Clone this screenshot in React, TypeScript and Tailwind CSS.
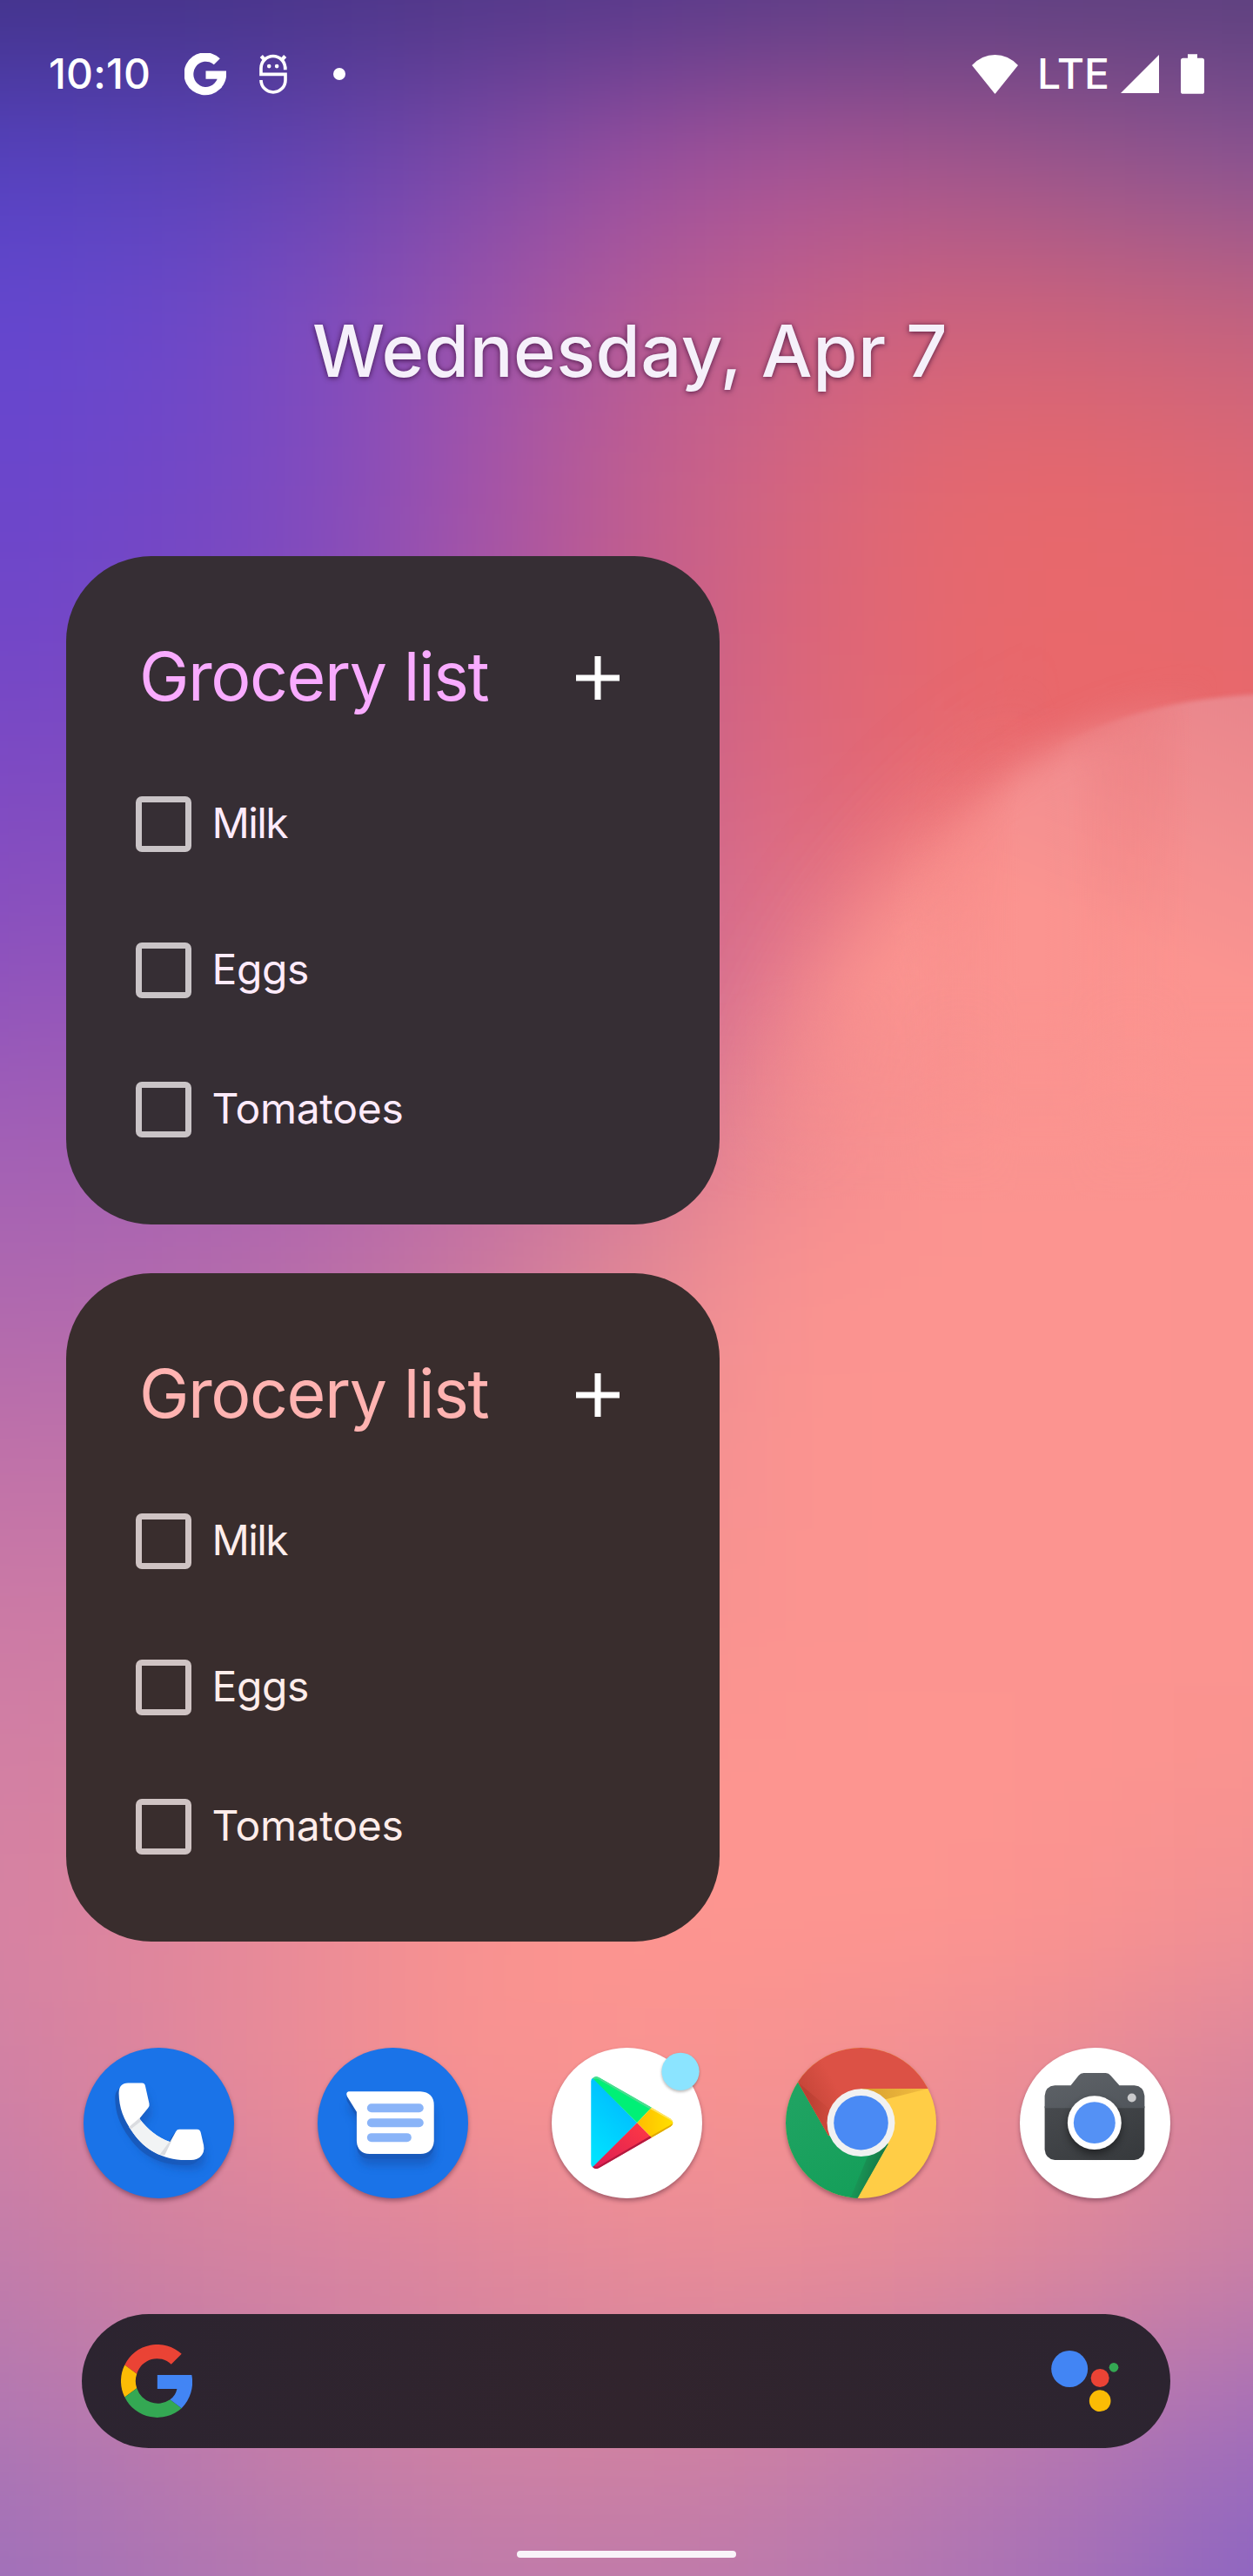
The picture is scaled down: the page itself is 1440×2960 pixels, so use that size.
import type { ReactNode } from "react";

/* Wallpaper colours on a 9 x 17 lattice; the blur blends neighbouring cells. */
const MESH: string[] = [
  "433389 453388 4a3588 503787 54388a 5a3c86 5d3e84 5c3f80 5a3f7e",
  "5542c0 5843bb 6444b2 7d4aa9 984fa0 a75498 a3568f 97568f 8a5494",
  "6447d0 6a48ca 7d4cbf 9a52ac b45b98 c56088 d0637c cc637c c4637f",
  "6a46cc 7047c8 7f4bbf a052ab bf5d90 d46580 e4686f e7686c de6874",
  "7247c8 7748c4 854cbb a454a6 c05d8f d9657b e6686e ea686a e7686c",
  "7f4bc2 844dbf 9251b5 ac58a4 c7628f dc6a80 e8696f ea686a e7686c",
  "8d52bd 9455ba a05ab3 b460a6 ca6895 e2758a f38b8c fb9490 fb9490",
  "a05fb6 a560b4 ac63b0 bd6da6 cf7698 ef888f fb9490 fb9490 fb9490",
  "ae68af b069ae b86da9 c8769f e08896 fa9390 fc9490 fc9490 fb9490",
  "bf71a9 c073a8 c877a2 d8809b ee8c93 fb9490 fc9490 fc9490 fb9490",
  "cb7aa5 ce7ca4 d582a0 e08698 f49090 fb9490 fc9490 fc9490 fb9490",
  "d27fa3 d783a1 e0869b f08e94 fc9490 fd9590 fd9590 fc9490 f9938f",
  "d682a2 e0869c ec8c97 f99290 fd9590 fd9590 fd9590 f99290 f08f94",
  "cf80a5 de869d eb8c97 f89290 f99391 f59190 ee8e95 e58a98 d5839f",
  "c27cab d0819f d683a1 de869c e78b98 ea8c96 e48a98 da869d cb80a4",
  "b077b2 bd7aac c97fa6 d283a1 d383a0 cf81a3 c27cab b677b0 a46fb8",
  "9e6fbb ab74b4 b578b0 be7aab c07aaa bb79ad af75b3 a26eb9 8a64c3",
];

const clampRow = (r: number) => Math.min(Math.max(r, 0), 16);
const clampCol = (c: number) => Math.min(Math.max(c, 0), 8);

function Wallpaper() {
  const cells: ReactNode[] = [];
  for (let r = -2; r <= 18; r++) {
    const row = MESH[clampRow(r)].split(" ");
    for (let c = -2; c <= 10; c++) {
      cells.push(
        <rect key={`${r}:${c}`} x={c * 180 - 91} y={r * 185 - 93.5} width="182" height="187" fill={`#${row[clampCol(c)]}`} />,
      );
    }
  }
  const ridge = "M1700 812 C1600 797 1480 790 1380 804 C1260 822 1170 872 1090 950 C1000 1040 925 1150 885 1290 L870 1500 H1700 Z";
  return (
    <svg className="absolute inset-0 h-full w-full" viewBox="0 0 1440 2960" preserveAspectRatio="none" aria-hidden="true">
      <defs>
        <filter id="mesh" filterUnits="userSpaceOnUse" x="-320" y="-320" width="2080" height="3600" colorInterpolationFilters="sRGB">
          <feGaussianBlur stdDeviation="84" />
        </filter>
        <filter id="soft" filterUnits="userSpaceOnUse" x="500" y="500" width="1300" height="1300"><feGaussianBlur stdDeviation="56" /></filter>
        <filter id="mid" filterUnits="userSpaceOnUse" x="500" y="500" width="1300" height="1300"><feGaussianBlur stdDeviation="20" /></filter>
        <filter id="crisp" filterUnits="userSpaceOnUse" x="500" y="500" width="1300" height="1300"><feGaussianBlur stdDeviation="2.5" /></filter>
        <linearGradient id="peach" gradientUnits="userSpaceOnUse" x1="1400" y1="795" x2="1280" y2="1080">
          <stop offset="0" stopColor="#e9868c" />
          <stop offset="0.55" stopColor="#f38f90" />
          <stop offset="1" stopColor="#fb9490" />
        </linearGradient>
        <linearGradient id="gSoft" gradientUnits="userSpaceOnUse" x1="1040" y1="0" x2="1220" y2="0">
          <stop offset="0" stopColor="#fff" /><stop offset="1" stopColor="#000" />
        </linearGradient>
        <linearGradient id="gMid" gradientUnits="userSpaceOnUse" x1="1020" y1="0" x2="1400" y2="0">
          <stop offset="0" stopColor="#000" /><stop offset="0.4" stopColor="#fff" /><stop offset="0.55" stopColor="#fff" /><stop offset="1" stopColor="#000" />
        </linearGradient>
        <linearGradient id="gCrisp" gradientUnits="userSpaceOnUse" x1="1200" y1="0" x2="1370" y2="0">
          <stop offset="0" stopColor="#000" /><stop offset="1" stopColor="#fff" />
        </linearGradient>
        <linearGradient id="gFade" gradientUnits="userSpaceOnUse" x1="0" y1="1120" x2="0" y2="1380">
          <stop offset="0" stopColor="#fff" /><stop offset="1" stopColor="#000" />
        </linearGradient>
        <mask id="mSoft" maskUnits="userSpaceOnUse" x="0" y="0" width="1440" height="2960"><rect width="1440" height="2960" fill="url(#gSoft)" /></mask>
        <mask id="mMid" maskUnits="userSpaceOnUse" x="0" y="0" width="1440" height="2960"><rect width="1440" height="2960" fill="url(#gMid)" /></mask>
        <mask id="mCrisp" maskUnits="userSpaceOnUse" x="0" y="0" width="1440" height="2960"><rect width="1440" height="2960" fill="url(#gCrisp)" /></mask>
        <mask id="mFade" maskUnits="userSpaceOnUse" x="0" y="0" width="1440" height="2960"><rect width="1440" height="2960" fill="url(#gFade)" /></mask>
      </defs>
      <g filter="url(#mesh)">{cells}</g>
      <g mask="url(#mFade)">
        <g mask="url(#mSoft)"><path d={ridge} fill="url(#peach)" filter="url(#soft)" /></g>
        <g mask="url(#mMid)"><path d={ridge} fill="url(#peach)" filter="url(#mid)" /></g>
        <g mask="url(#mCrisp)"><path d={ridge} fill="url(#peach)" filter="url(#crisp)" /></g>
      </g>
    </svg>
  );
}

const G_SHAPE = "M387 194 A125.5 126 0 1 0 424 267 H303 V315 H371 A73 75.5 0 1 1 351 230 Z";

function GoogleMark({ className }: { className: string }) {
  return (
    <svg className={className} viewBox="177 162 247 252" preserveAspectRatio="none" fill="white">
      <path d={G_SHAPE} />
    </svg>
  );
}

function GoogleLogo() {
  return (
    <svg className="h-[84px] w-[82px]" viewBox="177 162 247 252">
      <path fill="#ea4335" d="M190 232 A125.5 126 0 0 1 387 194 L351 230 A73 75.5 0 0 0 232 263 Z" />
      <path fill="#fbbc05" d="M190 232 A125.5 126 0 0 0 190 344 L232 313 A75 75 0 0 1 232 263 Z" />
      <path fill="#34a853" d="M190 344 A126 126 0 0 0 387 382 L347 352 A76 76 0 0 1 232 313 Z" />
      <path fill="#4285f4" d="M303 267 H422 A128 128 0 0 1 387 382 L347 352 A60 60 0 0 0 371 315 H303 Z" />
    </svg>
  );
}

function StatusBar() {
  return (
    <header className="flex h-[170px] items-center justify-between pr-[56px] pl-[56px] text-[48px] leading-[60px] font-medium text-white">
      <div className="flex items-center">
        <span className="tracking-[0.15px]">10:10</span>
        <GoogleMark className="ml-[39px] h-[49px] w-[48px]" />
        <svg className="ml-[38px] h-[46px] w-[32px]" viewBox="892 97 97 138" fill="none" stroke="white" strokeWidth="11">
          <path d="M988 146 H982 A42 42 0 0 0 898 146 V167 H983 V187 A42.500 42.500 0 0 1 898 187" />
          <path d="M899 104 L911 117 M982 104 L970 117" strokeWidth="13" />
          <circle cx="926" cy="139" r="7" fill="white" stroke="none" />
          <circle cx="953" cy="139" r="7" fill="white" stroke="none" />
        </svg>
        <span className="ml-[53px] h-[14px] w-[14px] rounded-full bg-white" />
      </div>
      <div className="flex items-center">
        <svg className="h-[45px] w-[53px]" viewBox="111 99 159 135" fill="white">
          <path d="M111 135 Q145 99 190.500 99 Q236 99 270 135 L193 231 Q190.500 235 188 231 Z" />
        </svg>
        <span className="ml-[22px]">LTE</span>
        <svg className="ml-[13px] h-[44px] w-[44px]" viewBox="0 0 44 44" fill="white">
          <path d="M0 44 L44 0 V44 Z" />
        </svg>
        <svg className="ml-[25px] h-[46px] w-[27px]" viewBox="831 97 81 137" fill="white">
          <path d="M855 97 H888 V111 H904 Q912 111 912 119 V226 Q912 234 904 234 H839 Q831 234 831 226 V119 Q831 111 839 111 H855 Z" />
        </svg>
      </div>
    </header>
  );
}

type WidgetProps = { card: string; title: string; item: string; box: string };

function GroceryWidget({ card, title, item, box }: WidgetProps) {
  const rows = [
    { name: "Milk", gap: "mt-[86px]", tracking: "tracking-[-1.6px]" },
    { name: "Eggs", gap: "mt-[104px]", tracking: "tracking-[-0.4px]" },
    { name: "Tomatoes", gap: "mt-[96px]", tracking: "tracking-[-0.3px]" },
  ];
  return (
    <section className={`h-[768px] w-[751px] rounded-[98px] pt-[90px] pl-[80px] ${card}`}>
      <div className="flex h-[100px] items-center justify-between pr-[115px] pl-[4px]">
        <h2 className={`-mt-[4px] text-[77px] leading-[100px] tracking-[-1.44px] ${title}`}>Grocery list</h2>
        <svg className="h-[50px] w-[50px]" viewBox="0 0 50 50" fill="white">
          <path d="M21.500 0 H28.500 V21.500 H50 V28.500 H28.500 V50 H21.500 V28.500 H0 V21.500 H21.500 Z" />
        </svg>
      </div>
      <ul>
        {rows.map((r) => (
          <li key={r.name} className={`flex h-[64px] items-center ${r.gap}`}>
            <span className={`h-[64px] w-[64px] rounded-[7px] border-[7px] ${box}`} />
            <span className={`-mt-[3px] ml-[23.5px] text-[48px] leading-[60px] ${r.tracking} ${item}`}>{r.name}</span>
          </li>
        ))}
      </ul>
    </section>
  );
}

function AppIcon({ viewBox, bg, children }: { viewBox: string; bg: string; children: ReactNode }) {
  return (
    <div className={`relative h-[173px] w-[173px] rounded-full shadow-[0_3px_5px_rgba(60,20,40,0.4)] ${bg}`}>
      <svg className="h-full w-full overflow-visible" viewBox={viewBox}>{children}</svg>
    </div>
  );
}

const PHONE =
  "M170 225 Q170 190 202 190 H250 Q259 190 261 199 L275 261 Q277 269 271 276 L241 313 C270 350 305 380 347 393 L367 357 Q371 350 379 350 H440 Q451 351 453 361 L463 405 Q468 430 450 446 Q440 455 420 456 H400 C320 454 260 420 220 363 C185 315 171 275 170 225 Z";
const BUBBLE =
  "M962 219 H1210 Q1257 222 1257 267 V390 Q1254 432 1210 435 H1035 Q992 432 990 390 V290 L957 236 Q951 222 962 219 Z";

function Dock() {
  return (
    <nav className="flex items-center justify-between pr-[95px] pl-[96px]">
      <AppIcon viewBox="48 68 520 520" bg="bg-[#1a73e8]">
        <defs>
          <filter id="iconBlur" x="-30%" y="-30%" width="160%" height="170%"><feGaussianBlur stdDeviation="14" /></filter>
          <clipPath id="phoneClip"><path d={PHONE} /></clipPath>
        </defs>
        <path d={PHONE} transform="translate(6 32)" fill="#174ea6" opacity="0.5" filter="url(#iconBlur)" />
        <path d={PHONE} transform="translate(-13 17)" fill="#185abc" />
        <path d={PHONE} transform="translate(-7 9)" fill="#185abc" />
        <path d={PHONE} fill="white" />
        <g clipPath="url(#phoneClip)">
          <path d="M203 344 L241 310 L352 390 L320 438 L260 430 Z" fill="#f1f3f4" />
          <path d="M200 346 L243 310 L249 320 L207 353 Z M345 392 L354 386 L328 440 L312 436 Z" fill="#dadce0" />
        </g>
      </AppIcon>
      <AppIcon viewBox="855 68 520 520" bg="bg-[#1a73e8]">
        <path d={BUBBLE} transform="translate(4 40)" fill="#174ea6" opacity="0.5" filter="url(#iconBlur)" />
        <path d={BUBBLE} transform="translate(0 17)" fill="#185abc" />
        <path d={BUBBLE} transform="translate(0 9)" fill="#185abc" />
        <path d={BUBBLE} fill="white" />
        <g fill="#8ab4f8">
          <rect x="1026" y="261" width="195" height="30" rx="15" />
          <rect x="1026" y="312" width="195" height="30" rx="15" />
          <rect x="1026" y="363" width="153" height="30" rx="15" />
        </g>
      </AppIcon>
      <AppIcon viewBox="102 68 520 520" bg="bg-white">
        <defs>
          <linearGradient id="playBlue" x1="0.8" y1="0" x2="0.3" y2="1"><stop offset="0" stopColor="#00b4ff" /><stop offset="1" stopColor="#00e2ff" /></linearGradient>
          <linearGradient id="playRed" x1="1" y1="0" x2="0" y2="1"><stop offset="0" stopColor="#ff3a44" /><stop offset="1" stopColor="#dc1c55" /></linearGradient>
          <linearGradient id="playYellow" x1="1" y1="0" x2="0" y2="0"><stop offset="0" stopColor="#ffe000" /><stop offset="1" stopColor="#ffbd00" /></linearGradient>
          <filter id="badgeBlur" x="-20%" y="-20%" width="140%" height="140%"><feGaussianBlur stdDeviation="4" /></filter>
        </defs>
        <path fill="url(#playBlue)" d="M238 184 Q238 175 245 172 L397 327 L245 482 Q238 478 238 470 Z" />
        <path fill="#00f076" d="M244 174 Q252 164 266 171 L447 275 L397 327 Z" />
        <path fill="url(#playYellow)" d="M447 275 L512 313 Q530 327 512 341 L447 378 L397 327 Z" />
        <path fill="url(#playRed)" d="M244 480 Q252 490 266 483 L447 378 L397 327 Z" />
        <path fill="#4ddb90" d="M244 174 Q252 164 266 171 L447 275 L442 280 L264 177 Q254 173 248 177 Z" />
        <path fill="#ffe566" d="M447 275 L512 313 Q520 319 521 325 Q516 320 510 317 L443 279 Z" />
        <path fill="#b3193f" d="M244 480 Q252 490 266 483 L447 378 L442 373 L264 477 Q254 481 248 476 Z" />
        <path fill="#e0a800" d="M447 378 L512 341 Q520 335 521 329 Q516 333 510 336 L443 374 Z" />
        <circle cx="547" cy="155" r="66" fill="#444" opacity="0.35" filter="url(#badgeBlur)" />
        <circle cx="547" cy="150" r="65" fill="#8be4ff" />
      </AppIcon>
      <AppIcon viewBox="908 68 520 520" bg="bg-[#ffcd46]">
        <defs>
          <clipPath id="disc"><circle cx="1168" cy="328" r="260" /></clipPath>
          <linearGradient id="chRed" gradientUnits="userSpaceOnUse" x1="960" y1="190" x2="1050" y2="140"><stop offset="0" stopColor="#c8473a" /><stop offset="1" stopColor="#dc5145" /></linearGradient>
          <linearGradient id="chGreen" x1="0" y1="0" x2="0.5" y2="1"><stop offset="0" stopColor="#24a566" /><stop offset="1" stopColor="#159f5a" /></linearGradient>
          <linearGradient id="chGShade" gradientUnits="userSpaceOnUse" x1="1230" y1="480" x2="1160" y2="460"><stop offset="0" stopColor="#187a48" /><stop offset="1" stopColor="#189a58" /></linearGradient>
          <linearGradient id="chYShade" gradientUnits="userSpaceOnUse" x1="1200" y1="210" x2="1390" y2="225"><stop offset="0" stopColor="#dba332" /><stop offset="1" stopColor="#f2bd40" /></linearGradient>
          <linearGradient id="chRShade" gradientUnits="userSpaceOnUse" x1="985" y1="245" x2="1060" y2="240"><stop offset="0" stopColor="#bb4033" /><stop offset="1" stopColor="#d04a3d" /></linearGradient>
        </defs>
        <g clipPath="url(#disc)">
          <path d="M900 60 V600 H1148 L1262 400 L1168 328 L1056 372 L951 188 Z" fill="url(#chGreen)" />
          <path d="M1190 445 L1262 400 L1155 590 L1130 590 Z" fill="url(#chGShade)" />
          <path d="M908 60 H1440 V209 H1168 L1070 360 L1056 372 L951 188 Z" fill="url(#chRed)" />
          <path d="M951 188 L1056 372 L1060 280 Z" fill="url(#chRShade)" />
          <path d="M1168 209 H1400 L1250 247 Z" fill="url(#chYShade)" />
        </g>
        <circle cx="1168" cy="327" r="117" fill="#f1f1f1" />
        <circle cx="1168" cy="327" r="94" fill="#4a8af4" />
      </AppIcon>
      <AppIcon viewBox="96 68 520 520" bg="bg-white">
        <defs>
          <linearGradient id="camTop" x1="0" y1="0" x2="1" y2="1"><stop offset="0" stopColor="#5f6368" /><stop offset="1" stopColor="#50555b" /></linearGradient>
          <linearGradient id="camBody" x1="0" y1="0" x2="1" y2="1"><stop offset="0" stopColor="#474a4e" /><stop offset="1" stopColor="#36393c" /></linearGradient>
        </defs>
        <path d="M182 270 H527 V420 Q524 453 492 456 H217 Q185 453 182 420 Z" fill="url(#camBody)" />
        <path d="M182 276 V234 Q184 201 217 198 H272 L299 164 Q306 155 317 155 H393 Q403 155 410 164 L440 198 H492 Q524 201 527 234 V276 Z" fill="url(#camTop)" />
        <circle cx="354" cy="342" r="92" fill="#000" opacity="0.45" filter="url(#iconBlur)" />
        <circle cx="354" cy="327" r="93" fill="white" />
        <circle cx="354" cy="327" r="72" fill="#5491f5" />
        <circle cx="483" cy="241" r="15" fill="#cbcbcd" />
      </AppIcon>
    </nav>
  );
}

function SearchBar() {
  return (
    <div className="mr-[95px] ml-[94px] flex h-[154px] items-center justify-between rounded-full bg-linear-to-r from-[#2c2430] via-[#31242d] to-[#2c2430] pr-[59px] pl-[45px]">
      <GoogleLogo />
      <svg className="-mt-[1px] h-[70px] w-[78px]" viewBox="175 183 234 210">
        <circle cx="238.500" cy="246" r="63" fill="#4285f4" />
        <circle cx="343.500" cy="277.500" r="31.500" fill="#ea4335" />
        <circle cx="391" cy="241" r="16" fill="#34a853" />
        <circle cx="343.500" cy="356" r="37" fill="#fbbc05" />
      </svg>
    </div>
  );
}

export default function App() {
  return (
    <main className="relative h-[2960px] w-[1440px] overflow-hidden bg-[#fb9490] font-['Inter',sans-serif]">
      <Wallpaper />
      <div className="relative flex flex-col">
        <StatusBar />
        <h1 className="mt-[183px] ml-[359px] text-[83px] leading-[100px] font-medium tracking-[0.5px] whitespace-nowrap text-[#f5f0fa] [text-shadow:0_1px_6px_rgba(40,0,40,0.75)]">
          Wednesday, Apr 7
        </h1>
        <div className="mt-[186px] ml-[76px] flex flex-col gap-[56px]">
          <GroceryWidget card="bg-[#362e34]" title="text-[#f9abff]" item="text-[#ffebfb]" box="border-[#cac4c7]" />
          <GroceryWidget card="bg-[#392d2d]" title="text-[#ffb3b1]" item="text-[#ffedeb]" box="border-[#cfc3c3]" />
        </div>
        <div className="mt-[122px]"><Dock /></div>
        <div className="mt-[133px]"><SearchBar /></div>
        <div className="mt-[118px] h-[8px] w-[252px] self-center rounded-[4px] bg-[#f9f4f9]" />
      </div>
    </main>
  );
}
